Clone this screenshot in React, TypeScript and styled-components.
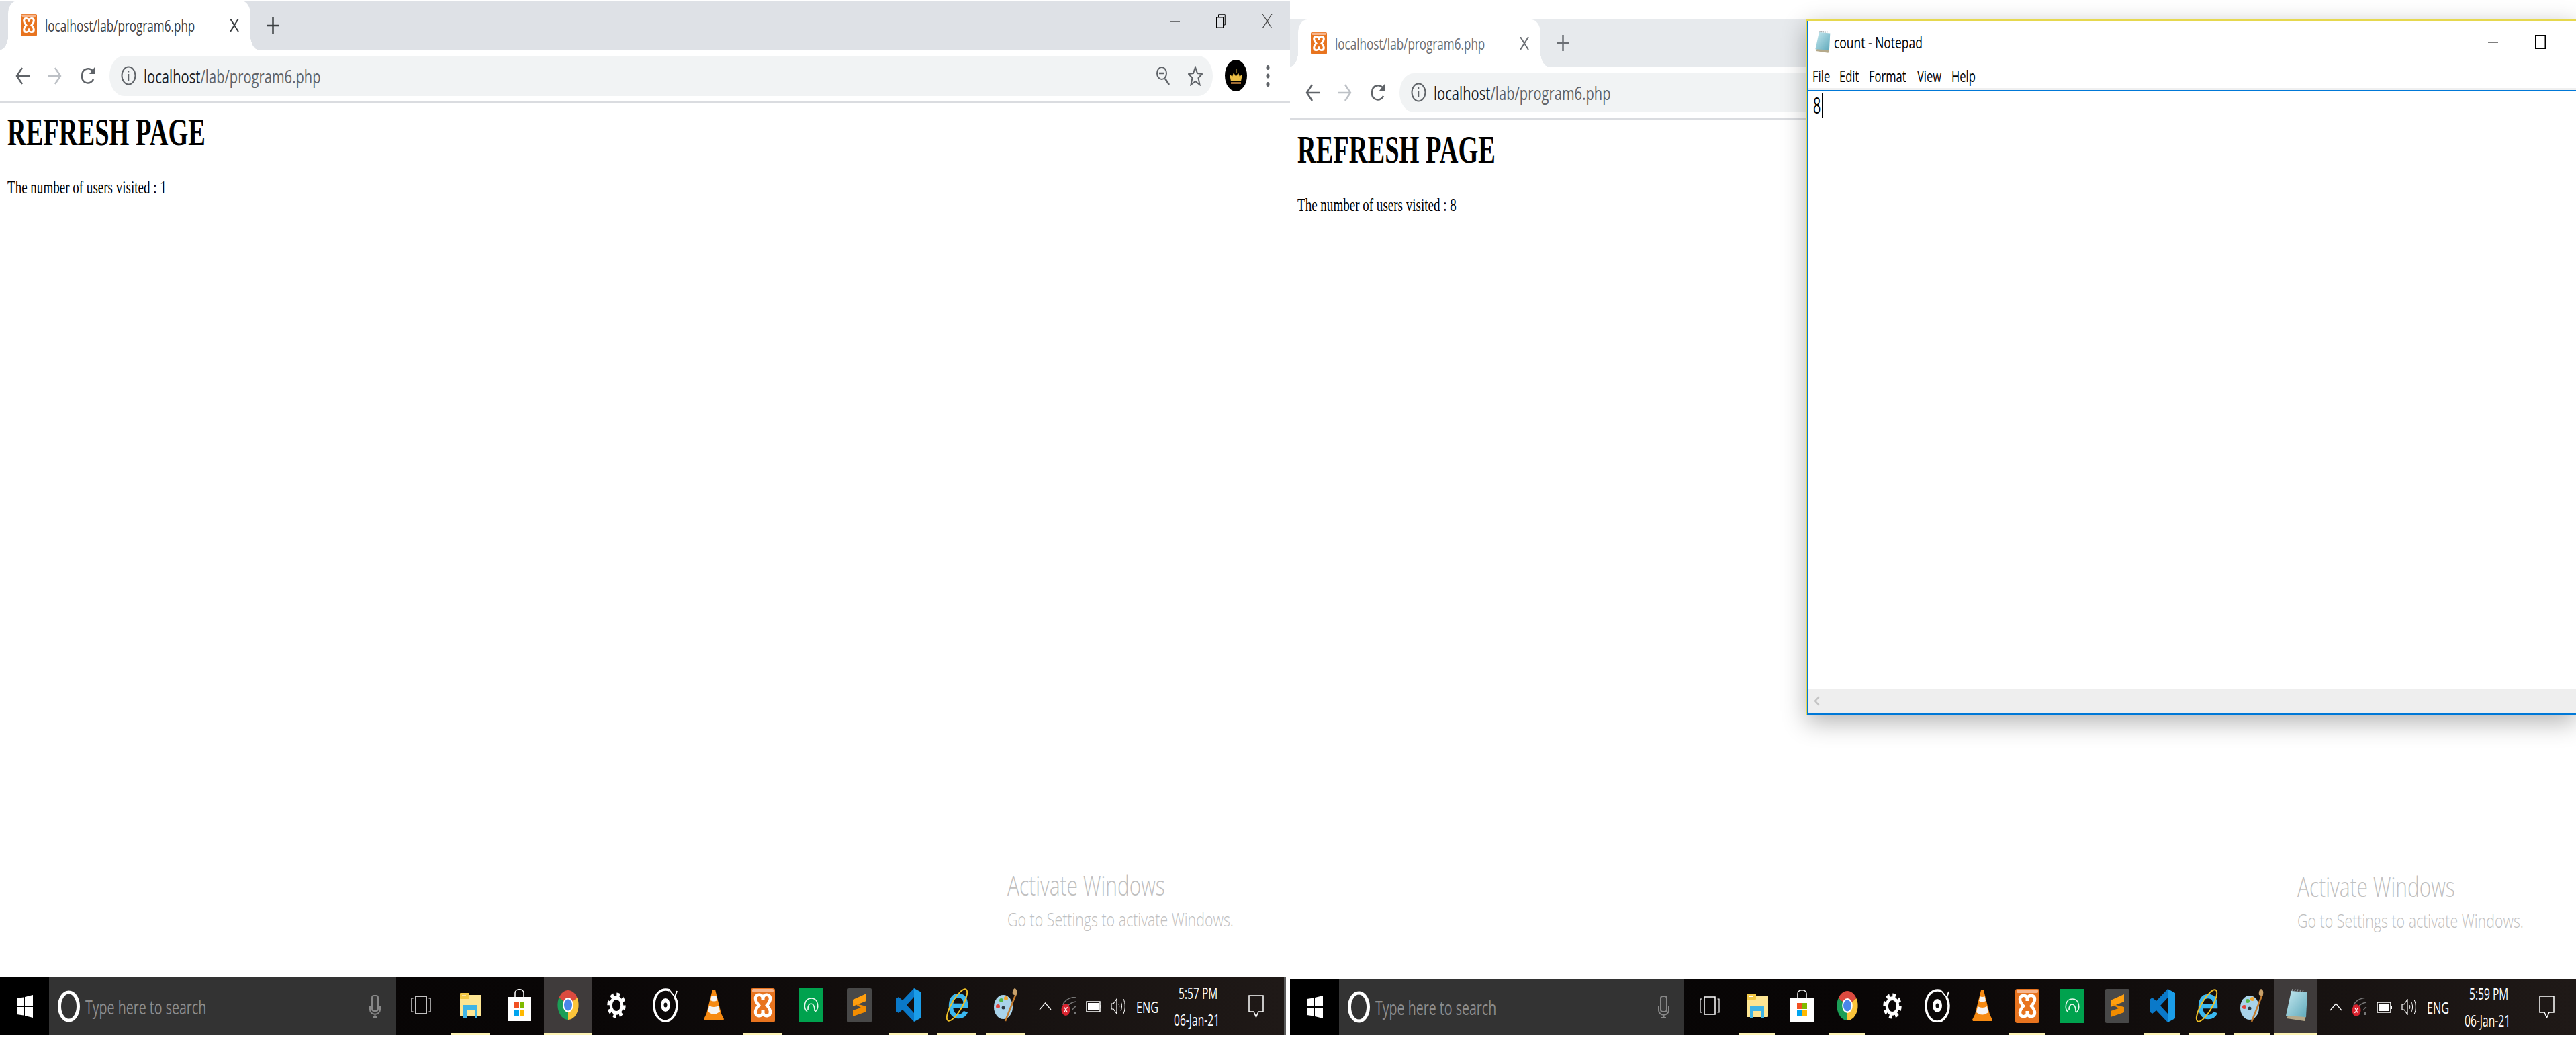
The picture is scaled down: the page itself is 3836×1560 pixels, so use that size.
import React from "react";
import styled, { createGlobalStyle } from "styled-components";

const UI_FONT = `"Open Sans", "Noto Sans", sans-serif`;

const GlobalStyle = createGlobalStyle`
  html, body {
    margin: 0;
    padding: 0;
    background: #ffffff;
  }
`;

const Page = styled.div`
  display: flex;
  width: 3836px;
  height: 1560px;
  overflow: hidden;
  background: #ffffff;
`;

const Desktop = styled.div<{ $width: number; $top: number }>`
  position: relative;
  display: flex;
  flex-direction: column;
  flex: none;
  width: ${(p) => p.$width}px;
  height: 1560px;
  padding: ${(p) => p.$top}px 0 19px 0;
  box-sizing: border-box;
`;

/* the whole screenshot is squashed sideways, so text gets a scaleX */
const Squeezed = styled.span<{ $w: number; $sx: number }>`
  display: inline-block;
  flex: none;
  width: ${(p) => p.$w}px;
  white-space: nowrap;
  transform: scaleX(${(p) => p.$sx});
  transform-origin: left center;
`;

const Browser = styled.div`
  display: flex;
  flex-direction: column;
  flex: 1;
  min-height: 0;
`;

const TabStrip = styled.div<{ $height: number; $bg: string }>`
  display: flex;
  flex: none;
  align-items: center;
  height: ${(p) => p.$height}px;
  padding-left: 12px;
  background: ${(p) => p.$bg};
`;

const Tab = styled.div`
  position: relative;
  display: flex;
  flex: none;
  align-items: center;
  align-self: stretch;
  width: 361px;
  padding-left: 19px;
  box-sizing: border-box;
  background: #ffffff;
  border-radius: 14px 14px 0 0 / 20px 20px 0 0;

  &::before,
  &::after {
    content: "";
    position: absolute;
    bottom: 0;
    width: 12px;
    height: 22px;
  }
  &::before {
    left: -12px;
    background: radial-gradient(ellipse at 0 0, transparent 70%, #ffffff 72%);
  }
  &::after {
    right: -12px;
    background: radial-gradient(ellipse at 100% 0, transparent 70%, #ffffff 72%);
  }
`;

const TabTitle = styled(Squeezed)<{ $color: string }>`
  margin-left: 12px;
  font: 24px ${UI_FONT};
  color: ${(p) => p.$color};
`;

const TabClose = styled.span`
  display: flex;
  margin-left: 52px;
`;

const NewTab = styled.span`
  display: flex;
  margin-left: 24px;
`;

const WindowControls = styled.div`
  display: flex;
  align-items: center;
  gap: 54px;
  height: 21px;
  margin-left: auto;
  margin-right: 26px;
  align-self: flex-start;
  margin-top: 20px;
`;

const Toolbar = styled.div<{ $height: number }>`
  display: flex;
  flex: none;
  align-items: center;
  gap: 28px;
  height: ${(p) => p.$height}px;
  padding: 0 30px 0 23px;
  border-bottom: 2px solid #dadce0;
  box-sizing: border-box;
`;

const Omnibox = styled.div<{ $height: number }>`
  display: flex;
  flex: 1;
  align-items: center;
  height: ${(p) => p.$height}px;
  margin-left: -7px;
  margin-right: -10px;
  padding: 0 15px 0 17px;
  background: #f1f3f4;
  border-radius: 22px / 30px;
`;

const Url = styled(Squeezed)`
  margin-left: 11px;
  font: 28px ${UI_FONT};
  color: #5f6368;

  b {
    font-weight: 400;
    color: #202124;
  }
`;

const OmniActions = styled.div`
  display: flex;
  align-items: center;
  gap: 27px;
  margin-left: auto;
`;

const Content = styled.main<{ $top: number }>`
  display: flex;
  flex-direction: column;
  flex: 1;
  min-height: 0;
  padding: ${(p) => p.$top}px 0 69px 11px;
`;

const Heading = styled.h1`
  margin: 0;
  font: bold 56px/56px "Liberation Serif", "Times New Roman", serif;
  color: #000000;
`;

const Visited = styled.p`
  margin: 41px 0 0;
  font: 27px/27px "Liberation Serif", "Times New Roman", serif;
  color: #000000;
`;

const Watermark = styled.div`
  display: flex;
  flex-direction: column;
  gap: 9px;
  margin-top: auto;
  margin-left: 1489px;
  color: #bfbfbf;
  font-family: ${UI_FONT};
  font-weight: 300;
`;

const WatermarkTitle = styled(Squeezed)`
  font-size: 40px;
  line-height: 46px;
`;

const WatermarkHint = styled(Squeezed)`
  font-size: 28px;
  line-height: 36px;
`;

const Taskbar = styled.footer<{ $height: number; $divider: boolean }>`
  display: flex;
  flex: none;
  align-items: stretch;
  height: ${(p) => p.$height}px;
  margin-right: ${(p) => (p.$divider ? 6 : 0)}px;
  background: linear-gradient(90deg, #050404 0%, #090606 45%, #1f1917 100%);
  border-right: ${(p) => (p.$divider ? "3px solid #5a5a5a" : "0")};
  box-sizing: border-box;
  color: #ffffff;
`;

const StartButton = styled.div`
  display: flex;
  flex: none;
  align-items: center;
  justify-content: center;
  width: 73px;
  background: #000000;
`;

const SearchBox = styled.div<{ $width: number }>`
  display: flex;
  flex: none;
  align-items: center;
  width: ${(p) => p.$width}px;
  padding: 0 22px 0 13px;
  box-sizing: border-box;
  background: #333333;
`;

const SearchText = styled(Squeezed)`
  margin-left: 8px;
  font: 30px ${UI_FONT};
  color: #8c8c8c;
`;

const MicSlot = styled.span`
  display: flex;
  margin-left: auto;
`;

const TaskSlot = styled.div<{ $width: number; $active?: boolean }>`
  display: flex;
  flex: none;
  flex-direction: column;
  width: ${(p) => p.$width}px;
  background: ${(p) => (p.$active ? "#3f3b3b" : "transparent")};
`;

const SlotIcon = styled.div`
  display: flex;
  flex: 1;
  align-items: center;
  justify-content: center;
`;

const RunningMark = styled.div<{ $on?: boolean; $flush?: boolean }>`
  flex: none;
  height: 4px;
  margin: 0 ${(p) => (p.$flush ? 0 : 7)}px;
  background: ${(p) => (p.$on ? "#fdf3b4" : "transparent")};
`;

const Tray = styled.div<{ $right: number }>`
  display: flex;
  align-items: center;
  gap: 14px;
  margin-left: auto;
  padding-right: ${(p) => p.$right}px;
`;

const TrayText = styled(Squeezed)`
  margin-left: 2px;
  font: 24px ${UI_FONT};
  color: #ffffff;
`;

const Clock = styled.div`
  display: flex;
  flex-direction: column;
  align-items: center;
  gap: 12px;
  width: 78px;
  margin-left: 8px;
  margin-right: 19px;
`;

const ClockLine = styled(Squeezed)`
  font: 24px/28px ${UI_FONT};
  color: #ffffff;
`;

const Notepad = styled.section`
  position: absolute;
  top: 29px;
  left: 769px;
  right: 0;
  height: 1036px;
  display: flex;
  flex-direction: column;
  box-sizing: border-box;
  background: #ffffff;
  border: 1px solid #e6d84e;
  border-top-width: 2px;
  border-right: 0;
  box-shadow: 0 10px 34px rgba(0, 0, 0, 0.3);
`;

const NotepadFrame = styled.div`
  display: flex;
  flex-direction: column;
  flex: 1;
  min-height: 0;
  border-left: 1px solid #0078d7;
  border-bottom: 3px solid #0078d7;
`;

const NotepadTitleBar = styled.div`
  display: flex;
  flex: none;
  align-items: center;
  height: 55px;
  padding-left: 10px;
  padding-top: 4px;
  box-sizing: content-box;
`;

const NotepadTitle = styled(Squeezed)`
  margin-left: 5px;
  font: 24px ${UI_FONT};
  color: #000000;
`;

const NotepadControls = styled.div`
  display: flex;
  align-items: center;
  gap: 55px;
  margin-left: auto;
  margin-right: 45px;
`;

const MenuBar = styled.nav`
  display: flex;
  flex: none;
  align-items: center;
  gap: 15px;
  height: 44px;
  padding-left: 7px;
  border-bottom: 2px solid #0078d7;
  box-shadow: inset 0 -3px 0 #f0f0f0;
`;

const MenuItem = styled(Squeezed)`
  font: 24px ${UI_FONT};
  color: #000000;
`;

const Editor = styled.div`
  display: flex;
  flex: 1;
  align-items: flex-start;
  padding: 2px 0 0 8px;
`;

const EditorText = styled(Squeezed)`
  font: 500 33px/37px ${UI_FONT};
  color: #000000;
`;

const Caret = styled.span`
  flex: none;
  width: 1px;
  height: 37px;
  margin-left: 2px;
  background: #000000;
`;

const HScrollbar = styled.div`
  display: flex;
  flex: none;
  align-items: center;
  height: 36px;
  padding-left: 9px;
  background: #eeeeee;
`;

type IcoProps = { w: number; h: number; vb: string; children: React.ReactNode };

function Ico({ w, h, vb, children }: IcoProps) {
  return (
    <svg width={w} height={h} viewBox={vb} preserveAspectRatio="none" style={{ flex: "none", display: "block" }}>
      {children}
    </svg>
  );
}

const XamppIcon = ({ w, h }: { w: number; h: number }) => (
  <Ico w={w} h={h} vb="0 0 36 51">
    <rect width="36" height="51" rx="3" fill="#e8741f" />
    <rect x="2" y="1" width="32" height="5" rx="2" fill="#f7b48a" />
    <path
      d="M18 13C14 8 7 9 7 15.500C7 20 10 23 12 25.500C10 28 7 31 7 35.500C7 42 14 43 18 38C22 43 29 42 29 35.500C29 31 26 28 24 25.500C26 23 29 20 29 15.500C29 9 22 8 18 13Z"
      fill="none"
      stroke="#ffffff"
      strokeWidth="4.500"
    />
    <path d="M18 13V18M18 33V38" stroke="#ffffff" strokeWidth="5" />
  </Ico>
);

const NotepadIcon = ({ w, h }: { w: number; h: number }) => (
  <Ico w={w} h={h} vb="0 0 35 50">
    <defs>
      <linearGradient id="padFill" x1="0" y1="0" x2="1" y2="1">
        <stop offset="0" stopColor="#c6e9f0" />
        <stop offset="1" stopColor="#5fa9bb" />
      </linearGradient>
    </defs>
    <polygon points="3,44 30,48 32,40 6,38" fill="#b5a98a" />
    <polygon points="10,3 34,5 32,42 2,40" fill="url(#padFill)" />
    <path d="M11 3L12 0M15 3L16 0M19 3.500L20 0.500M23 4L24 1M27 4L28 1" stroke="#8a8f92" strokeWidth="1.500" />
  </Ico>
);

const WindowsLogo = () => (
  <Ico w={24} h={34} vb="0 0 24 34">
    <polygon points="0,5 10,3.500 10,16 0,16" fill="#fff" />
    <polygon points="12,3 24,0 24,16 12,16" fill="#fff" />
    <polygon points="0,18 10,18 10,30.500 0,29" fill="#fff" />
    <polygon points="12,18 24,18 24,34 12,31" fill="#fff" />
  </Ico>
);

const Cortana = () => (
  <Ico w={33} h={48} vb="0 0 33 48">
    <ellipse cx="16.500" cy="24" rx="14" ry="21" fill="none" stroke="#fff" strokeWidth="5" />
  </Ico>
);

const Mic = () => (
  <Ico w={17} h={34} vb="0 0 17 34">
    <rect x="4" y="1" width="9" height="23" rx="3" fill="#3a3a3a" stroke="#888" strokeWidth="2" />
    <path d="M1 16V22C1 31 16 31 16 22V16M8.500 28V33M5 33H12" fill="none" stroke="#888" strokeWidth="2" />
  </Ico>
);

const TaskView = () => (
  <Ico w={30} h={28} vb="0 0 30 28">
    <rect x="7" y="1" width="16" height="26" fill="none" stroke="#fff" strokeWidth="1.500" />
    <path d="M3.500 4H1V24H3.500M26.500 4H29V24H26.500" fill="none" stroke="#fff" strokeWidth="1.200" />
  </Ico>
);

const Explorer = () => (
  <Ico w={32} h={37} vb="0 0 32 37">
    <rect y="3" width="32" height="32" rx="1" fill="#fde592" />
    <rect width="14" height="9" rx="1" fill="#f2c846" />
    <rect x="3" y="3.500" width="6" height="1.500" fill="#fff" />
    <path d="M5 37V18H26V37H22V26H10V37Z" fill="#3fb4e6" />
  </Ico>
);

const Store = () => (
  <Ico w={35} h={48} vb="0 0 35 48">
    <path d="M11 13V6C11 -1 24 -1 24 6V13" fill="none" stroke="#fff" strokeWidth="1.500" />
    <rect y="12" width="35" height="36" fill="#fff" />
    <rect x="10" y="20" width="7" height="9" fill="#f25022" />
    <rect x="18" y="20" width="7" height="9" fill="#7fba00" />
    <rect x="10" y="31" width="7" height="9" fill="#00a4ef" />
    <rect x="18" y="31" width="7" height="9" fill="#ffb900" />
  </Ico>
);

const ChromeLogo = () => (
  <Ico w={34} h={48} vb="0 0 48 48">
    <path d="M24 24L4.950 13A22 22 0 0 1 43.050 13Z" fill="#db4a3f" />
    <path d="M24 24L43.050 13A22 22 0 0 1 24 46Z" fill="#fbc43a" />
    <path d="M24 24L24 46A22 22 0 0 1 4.950 13Z" fill="#1b9e56" />
    <circle cx="24" cy="24" r="11" fill="#fff" />
    <circle cx="24" cy="24" r="8.500" fill="#4a86ea" />
  </Ico>
);

const Gear = () => (
  <Ico w={28} h={39} vb="0 0 24 24">
    <circle cx="12" cy="12" r="7" fill="none" stroke="#fff" strokeWidth="3.500" />
    <circle cx="12" cy="12" r="10" fill="none" stroke="#fff" strokeWidth="3.500" strokeDasharray="4 3.850" />
  </Ico>
);

const DiscIcon = () => (
  <Ico w={38} h={50} vb="0 0 38 50">
    <path d="M25 3C14 -1 2 7 2 25C2 41 11 49 19 49C28 49 36 38 36 25C36 20 35 17 33 13" fill="none" stroke="#fff" strokeWidth="3.500" />
    <path d="M25 3L33 13L36 4" fill="none" stroke="#fff" strokeWidth="2" />
    <ellipse cx="19" cy="25" rx="7" ry="10" fill="#fff" />
    <ellipse cx="19" cy="25" rx="2.500" ry="3.500" fill="#111" />
  </Ico>
);

const Vlc = () => (
  <Ico w={30} h={46} vb="0 0 30 46">
    <polygon points="13,0 17,0 26,36 30,44 29,46 1,46 0,44 4,36" fill="#f68a12" />
    <path d="M11.500 9Q15 11 18.500 9L20 16Q15 19 10 16Z" fill="#f4f4f4" />
    <path d="M6 33Q15 40 24 33L22 24Q15 28 8 24Z" fill="#f4f4f4" />
  </Ico>
);

const GreenApp = () => (
  <Ico w={36} h={51} vb="0 0 36 51">
    <rect width="36" height="51" fill="#00a24e" />
    <path d="M12 35C6 30 7 15 18 15C29 15 30 30 24 35M13 32C12 20 23 20 23 32V34" fill="none" stroke="#e8f7ee" strokeWidth="1.600" />
  </Ico>
);

const Sublime = () => (
  <Ico w={36} h={51} vb="0 0 36 51">
    <rect width="36" height="51" rx="2" fill="#484848" />
    <polygon points="28,8 28,19 8,27 8,17" fill="#ff9f0f" />
    <polygon points="8,22 28,27 28,35 8,42 8,33 20,29" fill="#f28c00" />
  </Ico>
);

const VsCode = () => (
  <Ico w={38} h={50} vb="0 0 38 50">
    <path d="M27 0L38 6V44L27 50Z" fill="#1b9de8" />
    <path d="M27 0L10 18L4 13L0 16V34L4 37L10 32L27 50V37L16 25L27 13Z" fill="#0a79c9" />
  </Ico>
);

const IeLogo = () => (
  <Ico w={35} h={51} vb="0 0 35 51">
    <path d="M8 26H30C30 14 25 11 19 11C11 11 8 18 8 27C8 37 13 42 19 42C24 42 28 40 30 35" fill="none" stroke="#3ab8f0" strokeWidth="6.500" />
    <ellipse cx="17" cy="25" rx="8" ry="27" transform="rotate(30 17 25)" fill="none" stroke="#eebf26" strokeWidth="2" />
  </Ico>
);

const PaintLogo = () => (
  <Ico w={35} h={50} vb="0 0 35 50">
    <ellipse cx="14" cy="28" rx="14" ry="18" fill="#a9d3ea" />
    <circle cx="6" cy="27" r="3" fill="#e0433c" />
    <circle cx="11" cy="18" r="3" fill="#54b948" />
    <circle cx="18" cy="15" r="3" fill="#f2a52f" />
    <circle cx="14" cy="29" r="2.500" fill="#2d3a44" />
    <path d="M33 8L17 49" stroke="#c47a2c" strokeWidth="2.500" />
    <path d="M28 9C27 4 29 1 31 0C35 2 35 6 33 11Z" fill="#c9a16a" />
  </Ico>
);

const Chevron = () => (
  <Ico w={19} h={12} vb="0 0 19 12">
    <path d="M1 11L9.500 1L18 11" fill="none" stroke="#fff" strokeWidth="1.200" />
  </Ico>
);

const Network = () => (
  <Ico w={23} h={28} vb="0 0 23 28">
    <path d="M3 12C5 5 12 1 22 0M10 14C12 10 16 8 22 7M17 19C18 17 20 15 22 14" fill="none" stroke="#777" strokeWidth="1.500" />
    <rect x="19" y="22" width="3" height="4" fill="#777" />
    <ellipse cx="7" cy="19" rx="6.500" ry="9" fill="#d8232f" />
    <path d="M4.500 15L9.500 23M9.500 15L4.500 23" stroke="#fff" strokeWidth="1.200" />
  </Ico>
);

const Battery = () => (
  <Ico w={23} h={17} vb="0 0 23 17">
    <rect x="1" y="1" width="20" height="15" fill="none" stroke="#fff" strokeWidth="1.500" />
    <rect x="3" y="3" width="16" height="11" fill="#fff" />
    <rect x="21.500" y="6" width="1.500" height="5" fill="#fff" />
  </Ico>
);

const Speaker = () => (
  <Ico w={22} h={24} vb="0 0 22 24">
    <path d="M1 8H4L9 1V23L4 16H1Z" fill="none" stroke="#fff" strokeWidth="1.200" />
    <path d="M12 9C13 11 13 13 12 15M15 5C17 9 17 15 15 19M19 1C22 8 22 16 19 23" fill="none" stroke="#fff" strokeWidth="1" />
  </Ico>
);

const NotifyBubble = () => (
  <Ico w={23} h={34} vb="0 0 23 34">
    <path d="M1 1H22V25H15L11.500 33L8 25H1Z" fill="none" stroke="#fff" strokeWidth="1.500" />
  </Ico>
);

const BackArrow = () => (
  <Ico w={21} h={26} vb="0 0 21 26">
    <path d="M21 13H3M10 1L2 13L10 25" fill="none" stroke="#5f6368" strokeWidth="2.500" />
  </Ico>
);

const ForwardArrow = () => (
  <Ico w={20} h={26} vb="0 0 20 26">
    <path d="M0 13H17M10 1L18 13L10 25" fill="none" stroke="#bdc1c6" strokeWidth="2.500" />
  </Ico>
);

const Reload = () => (
  <Ico w={22} h={26} vb="0 0 22 26">
    <path d="M19 7C16 0 2 0 2 13C2 26 16 26 19 18" fill="none" stroke="#5f6368" strokeWidth="2.500" />
    <polygon points="21,0 21,10 13,10" fill="#5f6368" />
  </Ico>
);

const InfoIcon = () => (
  <Ico w={23} h={29} vb="0 0 23 29">
    <ellipse cx="11.500" cy="14.500" rx="10" ry="13" fill="none" stroke="#5f6368" strokeWidth="2" />
    <path d="M11.500 12V22M11.500 7V9.500" stroke="#5f6368" strokeWidth="1.500" />
  </Ico>
);

const ZoomOut = () => (
  <Ico w={20} h={27} vb="0 0 20 27">
    <ellipse cx="8" cy="10" rx="7" ry="9" fill="none" stroke="#5f6368" strokeWidth="2" />
    <path d="M13 18L19 27" stroke="#5f6368" strokeWidth="2.500" />
    <path d="M4 10H12" stroke="#5f6368" strokeWidth="2.500" />
  </Ico>
);

const Star = () => (
  <Ico w={22} h={30} vb="0 0 22 30">
    <polygon points="11,2 14,11 21,12 15.500,18 17.500,28 11,23 4.500,28 6.500,18 1,12 8,11" fill="none" stroke="#5f6368" strokeWidth="2" />
  </Ico>
);

const Avatar = () => (
  <Ico w={33} h={47} vb="0 0 33 47">
    <ellipse cx="16.500" cy="23.500" rx="16.500" ry="23.500" fill="#000" />
    <polygon points="7,21 11,25 13,19 16.500,25 20,19 22,25 26,21 24,32 9,32" fill="#e9bd45" />
    <rect x="16" y="14" width="1.500" height="5" fill="#e9bd45" />
    <rect x="9" y="33" width="15" height="3" fill="#9c6a33" />
  </Ico>
);

const MenuDots = () => (
  <Ico w={6} h={32} vb="0 0 6 32">
    <ellipse cx="3" cy="3.500" rx="2.500" ry="3.500" fill="#5f6368" />
    <ellipse cx="3" cy="16" rx="2.500" ry="3.500" fill="#5f6368" />
    <ellipse cx="3" cy="28.500" rx="2.500" ry="3.500" fill="#5f6368" />
  </Ico>
);

const Minimize = () => (
  <Ico w={15} h={3} vb="0 0 15 3">
    <rect y="1" width="15" height="1.500" fill="#000" />
  </Ico>
);

const Restore = () => (
  <Ico w={14} h={21} vb="0 0 14 21">
    <rect x="0.750" y="4.750" width="10" height="15.500" fill="none" stroke="#000" strokeWidth="1.500" />
    <path d="M3.500 4V0.750H13.250V16H11" fill="none" stroke="#000" strokeWidth="1" />
  </Ico>
);

const CloseThin = () => (
  <Ico w={16} h={21} vb="0 0 16 21">
    <path d="M1 0L15 21M15 0L1 21" stroke="#444" strokeWidth="1.200" />
  </Ico>
);

const Maximize = () => (
  <Ico w={16} h={21} vb="0 0 16 21">
    <rect x="0.750" y="0.750" width="14.500" height="19.500" fill="none" stroke="#000" strokeWidth="1.500" />
  </Ico>
);

const TabX = ({ color }: { color: string }) => (
  <Ico w={14} h={19} vb="0 0 14 19">
    <path d="M1 0L13 19M13 0L1 19" stroke={color} strokeWidth="2" />
  </Ico>
);

const PlusIcon = ({ color }: { color: string }) => (
  <Ico w={19} h={24} vb="0 0 19 24">
    <path d="M9.500 0V24M0 12H19" stroke={color} strokeWidth="2.500" />
  </Ico>
);

const ScrollLeft = () => (
  <Ico w={9} h={15} vb="0 0 9 15">
    <path d="M8 1L2 7.500L8 14" fill="none" stroke="#c4c4c4" strokeWidth="2.500" />
  </Ico>
);

interface IBrowserWindow {
  stripHeight: number;
  stripColor: string;
  toolbarHeight: number;
  omniboxHeight: number;
  titleColor: string;
  closeColor: string;
  count: string;
  contentTop: number;
  controls?: boolean;
}

function BrowserWindow(props: IBrowserWindow) {
  return (
    <Browser>
      <TabStrip $height={props.stripHeight} $bg={props.stripColor}>
        <Tab>
          <XamppIcon w={24} h={33} />
          <TabTitle $w={223} $sx={0.712} $color={props.titleColor}>
            localhost/lab/program6.php
          </TabTitle>
          <TabClose>
            <TabX color={props.closeColor} />
          </TabClose>
        </Tab>
        <NewTab>
          <PlusIcon color={props.closeColor} />
        </NewTab>
        {props.controls && (
          <WindowControls>
            <Minimize />
            <Restore />
            <CloseThin />
          </WindowControls>
        )}
      </TabStrip>
      <Toolbar $height={props.toolbarHeight}>
        <BackArrow />
        <ForwardArrow />
        <Reload />
        <Omnibox $height={props.omniboxHeight}>
          <InfoIcon />
          <Url $w={259} $sx={0.72}>
            <b>localhost</b>/lab/program6.php
          </Url>
          <OmniActions>
            <ZoomOut />
            <Star />
          </OmniActions>
        </Omnibox>
        <Avatar />
        <MenuDots />
      </Toolbar>
      <Content $top={props.contentTop}>
        <Heading>
          <Squeezed $w={293} $sx={0.686}>
            REFRESH PAGE
          </Squeezed>
        </Heading>
        <Visited>
          <Squeezed $w={237} $sx={0.705}>
            The number of users visited : {props.count}
          </Squeezed>
        </Visited>
        <Watermark>
          <WatermarkTitle $w={235} $sx={0.748}>
            Activate Windows
          </WatermarkTitle>
          <WatermarkHint $w={340} $sx={0.763}>
            Go to Settings to activate Windows.
          </WatermarkHint>
        </Watermark>
      </Content>
    </Browser>
  );
}

interface IBar {
  height: number;
  divider: boolean;
  searchWidth: number;
  firstSlot: number;
  pitch: number;
  activeChrome: boolean;
  time: string;
  trayRight: number;
  withNotepad?: boolean;
}

function WindowsBar(props: IBar) {
  const apps: [React.ReactNode, boolean][] = [
    [<Explorer />, true],
    [<Store />, false],
    [<ChromeLogo />, true],
    [<Gear />, false],
    [<DiscIcon />, false],
    [<Vlc />, false],
    [<XamppIcon w={36} h={51} />, true],
    [<GreenApp />, false],
    [<Sublime />, false],
    [<VsCode />, true],
    [<IeLogo />, true],
    [<PaintLogo />, true],
  ];

  return (
    <Taskbar $height={props.height} $divider={props.divider}>
      <StartButton>
        <WindowsLogo />
      </StartButton>
      <SearchBox $width={props.searchWidth}>
        <Cortana />
        <SearchText $w={180} $sx={0.653}>
          Type here to search
        </SearchText>
        <MicSlot>
          <Mic />
        </MicSlot>
      </SearchBox>
      <TaskSlot $width={props.firstSlot}>
        <SlotIcon>
          <TaskView />
        </SlotIcon>
        <RunningMark />
      </TaskSlot>
      {apps.map(([icon, running], i) => (
        <TaskSlot key={i} $width={props.pitch} $active={i === 2 && props.activeChrome}>
          <SlotIcon>{icon}</SlotIcon>
          <RunningMark $on={running} $flush={i === 2 && props.activeChrome} />
        </TaskSlot>
      ))}
      {props.withNotepad && (
        <TaskSlot $width={64} $active>
          <SlotIcon>
            <NotepadIcon w={35} h={50} />
          </SlotIcon>
          <RunningMark $on $flush />
        </TaskSlot>
      )}
      <Tray $right={props.trayRight}>
        <Chevron />
        <Network />
        <Battery />
        <Speaker />
        <TrayText $w={34} $sx={0.68}>
          ENG
        </TrayText>
        <Clock>
          <ClockLine $w={65} $sx={0.65}>
            {props.time}
          </ClockLine>
          <ClockLine $w={78} $sx={0.65}>
            06-Jan-21
          </ClockLine>
        </Clock>
        <NotifyBubble />
      </Tray>
    </Taskbar>
  );
}

export default function App() {
  return (
    <Page>
      <GlobalStyle />
      <Desktop $width={1921} $top={1}>
        <BrowserWindow
          stripHeight={73}
          stripColor="#dee1e6"
          toolbarHeight={79}
          omniboxHeight={60}
          titleColor="#3c4043"
          closeColor="#3c4043"
          count="1"
          contentTop={16}
          controls
        />
        <WindowsBar
          height={86}
          divider
          searchWidth={516}
          firstSlot={76}
          pitch={72.4}
          activeChrome
          time="5:57 PM"
          trayRight={30}
        />
      </Desktop>
      <Desktop $width={1915} $top={29}>
        <BrowserWindow
          stripHeight={70}
          stripColor="#e7eaed"
          toolbarHeight={79}
          omniboxHeight={58}
          titleColor="#6b6f74"
          closeColor="#6b6f74"
          count="8"
          contentTop={17}
        />
        <WindowsBar
          height={84}
          divider={false}
          searchWidth={514}
          firstSlot={75}
          pitch={67}
          activeChrome={false}
          time="5:59 PM"
          trayRight={32}
          withNotepad
        />
        <Notepad>
          <NotepadFrame>
            <NotepadTitleBar>
              <NotepadIcon w={24} h={34} />
              <NotepadTitle $w={132} $sx={0.727}>
                count - Notepad
              </NotepadTitle>
              <NotepadControls>
                <Minimize />
                <Maximize />
              </NotepadControls>
            </NotepadTitleBar>
            <MenuBar>
              <MenuItem $w={25} $sx={0.69}>File</MenuItem>
              <MenuItem $w={29} $sx={0.69}>Edit</MenuItem>
              <MenuItem $w={57} $sx={0.69}>Format</MenuItem>
              <MenuItem $w={36} $sx={0.69}>View</MenuItem>
              <MenuItem $w={36} $sx={0.69}>Help</MenuItem>
            </MenuBar>
            <Editor>
              <EditorText $w={11} $sx={0.6}>8</EditorText>
              <Caret />
            </Editor>
            <HScrollbar>
              <ScrollLeft />
            </HScrollbar>
          </NotepadFrame>
        </Notepad>
      </Desktop>
    </Page>
  );
}
